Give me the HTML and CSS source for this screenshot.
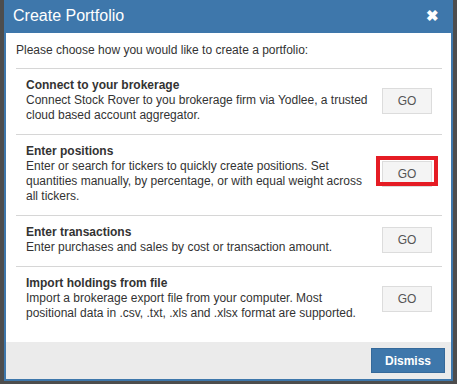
FILE: index.html
```html
<!DOCTYPE html>
<html lang="en">
<head>
  <meta charset="UTF-8" />
  <title>Create Portfolio</title>
  <link rel="stylesheet" href="styles.css">
</head>
<body>
  <div class="dialog">
    <div class="dialog-header">
      <span class="dialog-title">Create Portfolio</span>
      <span class="dialog-close">&#10006;</span>
    </div>
    <div class="dialog-body">
      <p class="intro">Please choose how you would like to create a portfolio:</p>

      <div class="option">
        <div class="option-text">
          <div class="option-title">Connect to your brokerage</div>
          <div>Connect Stock Rover to you brokerage firm via Yodlee, a trusted cloud based account aggregator.</div>
        </div>
        <button class="go-btn">GO</button>
      </div>

      <div class="option">
        <div class="option-text">
          <div class="option-title">Enter positions</div>
          <div>Enter or search for tickers to quickly create positions. Set quantities manually, by percentage, or with equal weight across all tickers.</div>
        </div>
        <div class="go-wrap">
          <button class="go-btn">GO</button>
          <span class="highlight"></span>
        </div>
      </div>

      <div class="option">
        <div class="option-text">
          <div class="option-title">Enter transactions</div>
          <div>Enter purchases and sales by cost or transaction amount.</div>
        </div>
        <button class="go-btn">GO</button>
      </div>

      <div class="option last">
        <div class="option-text">
          <div class="option-title">Import holdings from file</div>
          <div>Import a brokerage export file from your computer. Most positional data in .csv, .txt, .xls and .xlsx format are supported.</div>
        </div>
        <button class="go-btn">GO</button>
      </div>
    </div>
    <div class="dialog-footer">
      <button class="dismiss-btn">Dismiss</button>
    </div>
  </div>
</body>
</html>
```

FILE: styles.css
```css
:root {
  --color-blue: #3e77ab;
  --color-text: #333;
  --color-line: #d6d6d6;
  --font: "Liberation Sans", Arial, sans-serif;
}
* {
  box-sizing: border-box;
}
body {
  margin: 0;
  height: 384px;
  background: #4d4d4d;
  font-family: var(--font);
  color: var(--color-text);
  padding: 0 4px;
}
.dialog {
  border: 2px solid var(--color-blue);
  border-top: none;
  background: #fff;
}
.dialog-header {
  height: 33px;
  margin: 0 -2px;
  background: var(--color-blue);
  color: #fff;
  display: flex;
  align-items: center;
  justify-content: space-between;
  padding: 0 14px 1px 9px;
}
.dialog-title {
  font-size: 16px;
}
.dialog-close {
  font-size: 15px;
  font-weight: bold;
}
.dialog-body {
  padding: 0 9px 10px 10px;
  font-size: 12px;
  line-height: 15px;
}
.intro {
  margin: 0;
  padding: 10px 0 10px;
  border-bottom: 1px solid var(--color-line);
}
.option {
  display: flex;
  align-items: center;
  gap: 12px;
  padding: 9px 10px 11px;
  border-bottom: 1px solid var(--color-line);
}
.option.last {
  border-bottom: none;
}
.option-text {
  flex: 1;
}
.option-title {
  font-weight: bold;
}
.go-btn {
  display: block;
  width: 50px;
  height: 26px;
  background: #f4f4f4;
  border: 1px solid #dcdcdc;
  color: #555;
  font-family: var(--font);
  font-size: 12px;
  padding: 0;
}
.go-wrap {
  position: relative;
}
.highlight {
  position: absolute;
  left: -6px;
  top: -5px;
  width: 62px;
  height: 30px;
  border: 4px solid #e51c24;
}
.dialog-footer {
  background: #ebebeb;
  height: 37px;
  display: flex;
  justify-content: flex-end;
  align-items: flex-start;
  padding: 6px 6px 0;
}
.dismiss-btn {
  width: 74px;
  height: 25px;
  background: var(--color-blue);
  border: 1px solid #35699a;
  color: #fff;
  font-family: var(--font);
  font-size: 12px;
  font-weight: bold;
}
```
